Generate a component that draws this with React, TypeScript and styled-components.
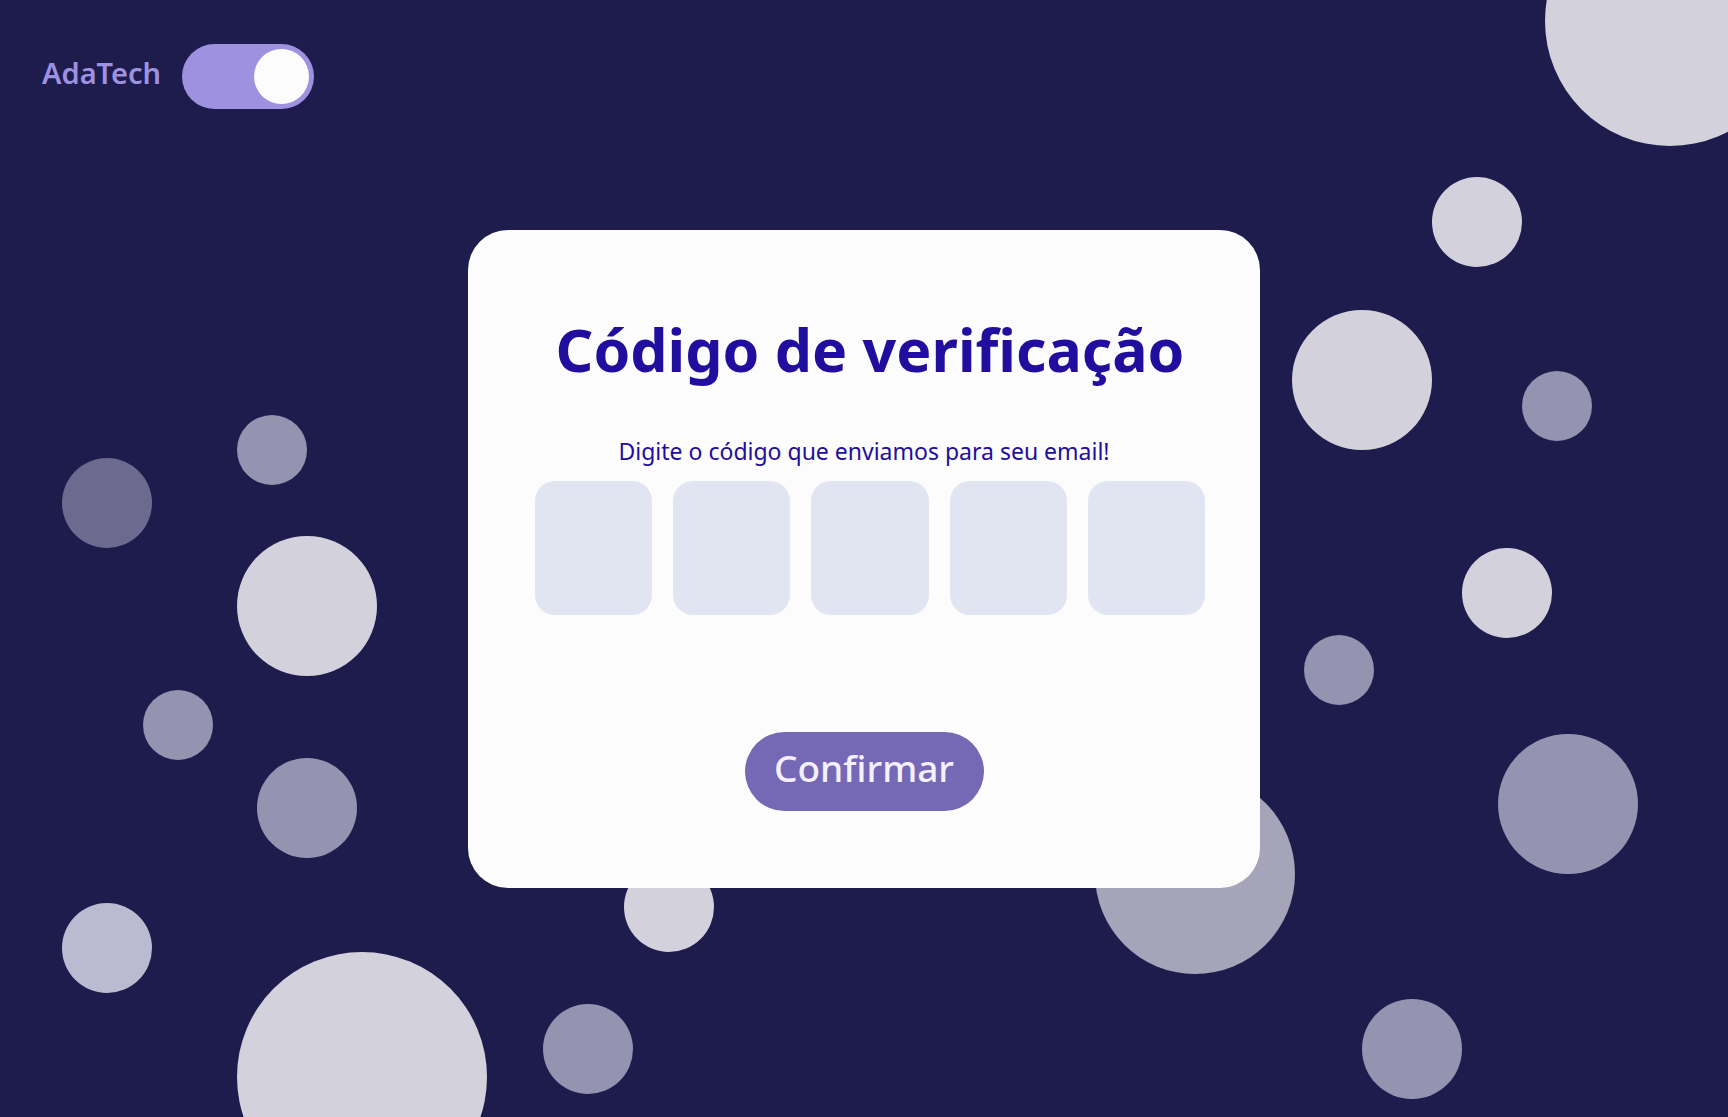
import React, { useRef, useState } from 'react';
import styled, { createGlobalStyle } from 'styled-components';

const colors = {
  night: '#1e1c4d',
  lilac: '#9d91e0',
  paper: '#fcfcfc',
  ink: '#210d9e',
  field: '#e1e5f1',
  action: '#7569b5',
  actionText: '#f5f0ff',
};

const tones = {
  light: '#d3d1dc',
  lavender: '#babbd0',
  haze: '#a6a4b9',
  mid: '#9494b0',
  dim: '#6c6a8e',
};

const GlobalStyle = createGlobalStyle`
  *, *::before, *::after { box-sizing: border-box; }
  body {
    margin: 0;
    background: ${colors.night};
    font-family: 'Noto Sans', 'Open Sans', sans-serif;
  }
`;

const Page = styled.div`
  position: relative;
  isolation: isolate;
  display: flex;
  flex-direction: column;
  min-height: 100vh;
  overflow: hidden;
`;

const Bubbles = styled.div`
  position: absolute;
  inset: 0;
  z-index: -1;
`;

type BubbleProps = {
  $side: 'left' | 'right';
  $x: number;
  $y: number;
  $size: number;
  $tone: keyof typeof tones;
};

const Bubble = styled.span<BubbleProps>`
  position: absolute;
  top: ${(p) => p.$y}px;
  ${(p) => p.$side}: ${(p) => p.$x}px;
  width: ${(p) => p.$size}px;
  height: ${(p) => p.$size}px;
  border-radius: 50%;
  background: ${(p) => tones[p.$tone]};
`;

const Header = styled.header`
  padding: 44px 42px 0;
`;

const ThemeLabel = styled.label`
  display: inline-flex;
  align-items: center;
  gap: 21px;
  color: ${colors.lilac};
  font-size: 29px;
  font-weight: 600;
  line-height: 40px;
  cursor: pointer;
`;

const BrandName = styled.span`
  padding-bottom: 8px;
`;

const Switch = styled.input`
  appearance: none;
  display: flex;
  align-items: center;
  width: 132px;
  height: 65px;
  margin: 0;
  padding: 5px;
  border-radius: 33px;
  background: ${colors.lilac};
  cursor: pointer;

  &::before {
    content: '';
    width: 55px;
    height: 55px;
    border-radius: 50%;
    background: ${colors.paper};
  }

  &:checked {
    justify-content: flex-end;
  }
`;

const Main = styled.main`
  display: flex;
  justify-content: center;
  padding: 121px 24px 48px;
`;

const Card = styled.form`
  display: flex;
  flex-direction: column;
  align-items: center;
  width: 100%;
  max-width: 792px;
  padding: 76px 0 77px;
  border-radius: 40px;
  background: ${colors.paper};
  color: ${colors.ink};
`;

const Title = styled.h1`
  margin: 0;
  padding-left: 12px;
  font-size: 59px;
  font-weight: 700;
  line-height: 86px;
  text-align: center;
`;

const Hint = styled.p`
  margin: 41px 0 12px;
  font-size: 23px;
  line-height: 36px;
  text-align: center;
`;

const CodeRow = styled.div`
  display: grid;
  grid-template-columns: repeat(5, 1fr);
  gap: 21px;
  width: 100%;
  padding: 0 55px 0 67px;
`;

const Digit = styled.input`
  width: 100%;
  height: 134px;
  padding: 0;
  border: 0;
  border-radius: 20px;
  background: ${colors.field};
  color: ${colors.ink};
  font: inherit;
  font-size: 59px;
  text-align: center;
`;

const Confirm = styled.button`
  margin: 117px 0 0;
  width: 239px;
  height: 79px;
  padding: 0 0 8px;
  border: 0;
  border-radius: 40px;
  background: ${colors.action};
  color: ${colors.actionText};
  font: inherit;
  font-size: 37px;
  font-weight: 500;
  line-height: 56px;
  cursor: pointer;
`;

const bubbles: Array<[BubbleProps['$side'], number, number, number, BubbleProps['$tone']]> = [
  ['left', 62, 458, 90, 'dim'],
  ['left', 237, 415, 70, 'mid'],
  ['left', 237, 536, 140, 'light'],
  ['left', 143, 690, 70, 'mid'],
  ['left', 257, 758, 100, 'mid'],
  ['left', 62, 903, 90, 'lavender'],
  ['left', 237, 952, 250, 'light'],
  ['left', 624, 862, 90, 'light'],
  ['left', 543, 1004, 90, 'mid'],
  ['right', 433, 774, 200, 'haze'],
  ['right', 266, 999, 100, 'mid'],
  ['right', -67, -104, 250, 'light'],
  ['right', 206, 177, 90, 'light'],
  ['right', 296, 310, 140, 'light'],
  ['right', 136, 371, 70, 'mid'],
  ['right', 176, 548, 90, 'light'],
  ['right', 354, 635, 70, 'mid'],
  ['right', 90, 734, 140, 'mid'],
];

const CODE_LENGTH = 5;

export default function App() {
  const [dark, setDark] = useState(true);
  const [code, setCode] = useState<string[]>(Array(CODE_LENGTH).fill(''));
  const fields = useRef<Array<HTMLInputElement | null>>([]);

  const updateDigit = (index: number, value: string) => {
    const digit = value.replace(/\D/g, '').slice(-1);
    setCode((current) => current.map((old, i) => (i === index ? digit : old)));
    if (digit) fields.current[index + 1]?.focus();
  };

  return (
    <>
      <GlobalStyle />
      <Page>
        <Bubbles aria-hidden="true">
          {bubbles.map(([side, x, y, size, tone]) => (
            <Bubble key={`${side}-${x}-${y}`} $side={side} $x={x} $y={y} $size={size} $tone={tone} />
          ))}
        </Bubbles>
        <Header>
          <ThemeLabel>
            <BrandName>AdaTech</BrandName>
            <Switch
              type="checkbox"
              role="switch"
              checked={dark}
              onChange={(event) => setDark(event.target.checked)}
            />
          </ThemeLabel>
        </Header>
        <Main>
          <Card onSubmit={(event) => event.preventDefault()}>
            <Title>Código de verificação</Title>
            <Hint id="code-hint">Digite o código que enviamos para seu email!</Hint>
            <CodeRow role="group" aria-labelledby="code-hint">
              {code.map((digit, index) => (
                <Digit
                  key={index}
                  ref={(node) => {
                    fields.current[index] = node;
                  }}
                  type="text"
                  inputMode="numeric"
                  aria-label={`Dígito ${index + 1}`}
                  value={digit}
                  onChange={(event) => updateDigit(index, event.target.value)}
                />
              ))}
            </CodeRow>
            <Confirm type="submit">Confirmar</Confirm>
          </Card>
        </Main>
      </Page>
    </>
  );
}
